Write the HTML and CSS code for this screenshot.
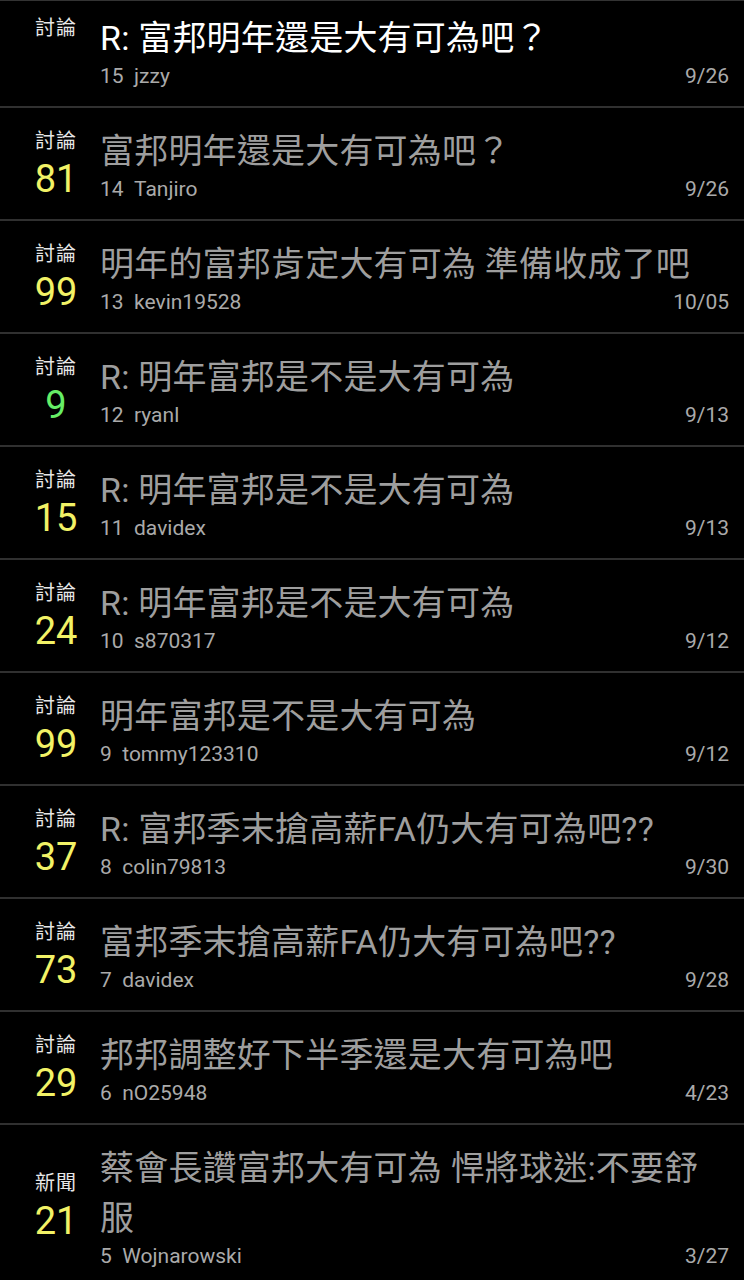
FILE: index.html
```html
<!DOCTYPE html>
<html lang="zh-Hant">
  <head>
    <meta charset="UTF-8" />
    <meta name="viewport" content="width=device-width, initial-scale=1.0" />
    <title>看板</title>
    <link rel="stylesheet" href="styles.css">
  </head>
  <body>
    <div class="top-line"></div>
    <ul class="list">
      <li class="item read-none">
        <div class="side">
          <div class="tag">討論</div>
          <div class="push"></div>
        </div>
        <div class="main">
          <div class="title new">R: 富邦明年還是大有可為吧？</div>
          <div class="meta"><span>15&nbsp;&nbsp;jzzy</span><span>9/26</span></div>
        </div>
      </li>
      <li class="item">
        <div class="side">
          <div class="tag">討論</div>
          <div class="push">81</div>
        </div>
        <div class="main">
          <div class="title">富邦明年還是大有可為吧？</div>
          <div class="meta"><span>14&nbsp;&nbsp;Tanjiro</span><span>9/26</span></div>
        </div>
      </li>
      <li class="item">
        <div class="side">
          <div class="tag">討論</div>
          <div class="push">99</div>
        </div>
        <div class="main">
          <div class="title">明年的富邦肯定大有可為 準備收成了吧</div>
          <div class="meta"><span>13&nbsp;&nbsp;kevin19528</span><span>10/05</span></div>
        </div>
      </li>
      <li class="item">
        <div class="side">
          <div class="tag">討論</div>
          <div class="push low">9</div>
        </div>
        <div class="main">
          <div class="title">R: 明年富邦是不是大有可為</div>
          <div class="meta"><span>12&nbsp;&nbsp;ryanl</span><span>9/13</span></div>
        </div>
      </li>
      <li class="item">
        <div class="side">
          <div class="tag">討論</div>
          <div class="push">15</div>
        </div>
        <div class="main">
          <div class="title">R: 明年富邦是不是大有可為</div>
          <div class="meta"><span>11&nbsp;&nbsp;davidex</span><span>9/13</span></div>
        </div>
      </li>
      <li class="item">
        <div class="side">
          <div class="tag">討論</div>
          <div class="push">24</div>
        </div>
        <div class="main">
          <div class="title">R: 明年富邦是不是大有可為</div>
          <div class="meta"><span>10&nbsp;&nbsp;s870317</span><span>9/12</span></div>
        </div>
      </li>
      <li class="item">
        <div class="side">
          <div class="tag">討論</div>
          <div class="push">99</div>
        </div>
        <div class="main">
          <div class="title">明年富邦是不是大有可為</div>
          <div class="meta"><span>9&nbsp;&nbsp;tommy123310</span><span>9/12</span></div>
        </div>
      </li>
      <li class="item">
        <div class="side">
          <div class="tag">討論</div>
          <div class="push">37</div>
        </div>
        <div class="main">
          <div class="title">R: 富邦季末搶高薪FA仍大有可為吧??</div>
          <div class="meta"><span>8&nbsp;&nbsp;colin79813</span><span>9/30</span></div>
        </div>
      </li>
      <li class="item">
        <div class="side">
          <div class="tag">討論</div>
          <div class="push">73</div>
        </div>
        <div class="main">
          <div class="title">富邦季末搶高薪FA仍大有可為吧??</div>
          <div class="meta"><span>7&nbsp;&nbsp;davidex</span><span>9/28</span></div>
        </div>
      </li>
      <li class="item">
        <div class="side">
          <div class="tag">討論</div>
          <div class="push">29</div>
        </div>
        <div class="main">
          <div class="title">邦邦調整好下半季還是大有可為吧</div>
          <div class="meta"><span>6&nbsp;&nbsp;nO25948</span><span>4/23</span></div>
        </div>
      </li>
      <li class="item">
        <div class="side">
          <div class="tag">新聞</div>
          <div class="push">21</div>
        </div>
        <div class="main">
          <div class="title">蔡會長讚富邦大有可為 悍將球迷:不要舒服</div>
          <div class="meta"><span>5&nbsp;&nbsp;Wojnarowski</span><span>3/27</span></div>
        </div>
      </li>
    </ul>
  </body>
</html>
```

FILE: styles.css
```css
* {
  margin: 0;
  padding: 0;
  box-sizing: border-box;
}

html,
body {
  background: #000;
  font-family: Roboto, "Noto Sans CJK TC", sans-serif;
  overflow: hidden;
}

.top-line {
  height: 1px;
  background: #333;
  position: relative;
  z-index: 1;
}

.list {
  list-style: none;
  margin-top: -6px;
}

.item {
  display: flex;
  align-items: center;
  padding: 18px 15px 17px 16px;
  border-bottom: 2px solid #303030;
}

.side {
  width: 80px;
  flex-shrink: 0;
  text-align: center;
}

.tag {
  color: #e6e6e6;
  font-size: 20px;
  line-height: 24px;
  letter-spacing: 1px;
}

.push {
  color: #f2f266;
  font-size: 38px;
  line-height: 40px;
  height: 40px;
  margin-top: 6px;
}

.push.low {
  color: #66ee66;
}

.main {
  flex: 1;
  min-width: 0;
  margin-left: 4px;
}

.title {
  color: #9e9e9e;
  font-size: 34px;
  line-height: 50px;
  letter-spacing: 0.2px;
  padding-right: 6px;
}

.title.new {
  color: #fff;
}

.meta {
  display: flex;
  justify-content: space-between;
  color: #aaa;
  font-size: 21px;
  line-height: 26px;
}
```
